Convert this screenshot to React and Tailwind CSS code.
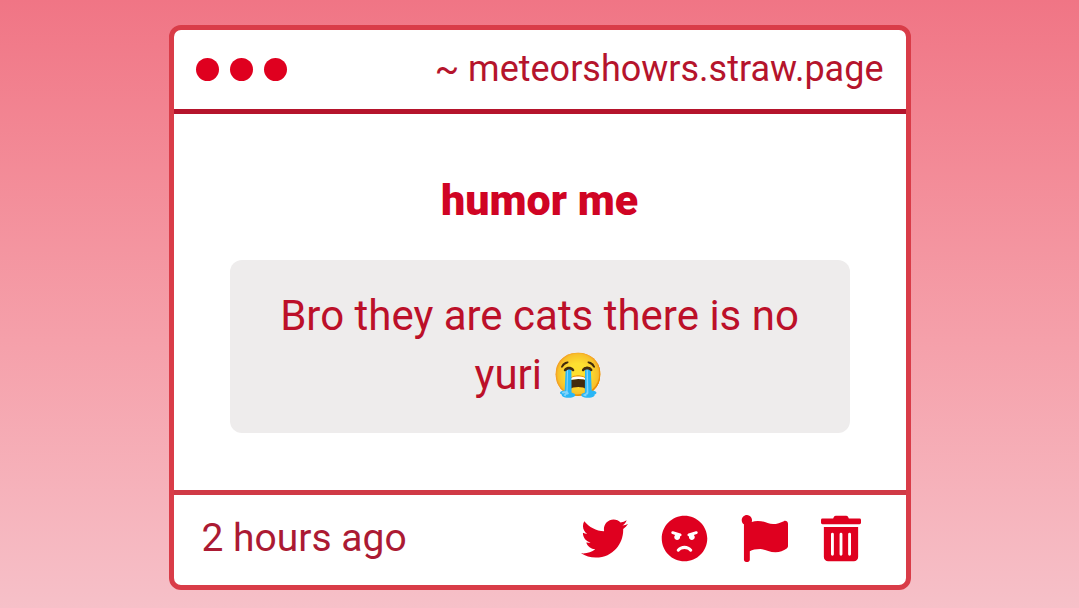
import React from 'react';
import { FaTwitter, FaAngry, FaFlag, FaTrashAlt } from 'react-icons/fa';

const actions = [
    { label: 'Share on Twitter', Icon: FaTwitter, size: 'h-[47px] w-[47px]' },
    { label: 'Block', Icon: FaAngry, size: 'h-[47px] w-[47px]' },
    { label: 'Report', Icon: FaFlag, size: 'h-[47px] w-[47px]' },
    { label: 'Delete', Icon: FaTrashAlt, size: 'h-[47px] w-10' },
];

function WindowHeader() {
    return (
        <header className="flex h-[84px] items-center justify-between border-b-5 border-[#b5142c] px-[22px]">
            <div className="flex gap-[11px]">
                <span className="size-[23px] rounded-full bg-[#df001f]" />
                <span className="size-[23px] rounded-full bg-[#df001f]" />
                <span className="size-[23px] rounded-full bg-[#df001f]" />
            </div>
            <a href="#" className="pb-0.5 text-4xl text-[#b5142c]">~ meteorshowrs.straw.page</a>
        </header>
    );
}

export default function App() {
    return (
        <div className="min-h-screen bg-linear-to-b from-[#f07585] to-[#f6c0c8] px-4 pt-[25px] pb-[18px] font-['Roboto',sans-serif]">
            <article className="mx-auto max-w-[742px] overflow-hidden rounded-xl border-5 border-[#d93c48] bg-white">
                <WindowHeader />

                <main className="px-14 pt-14 pb-[57px] text-center">
                    <h1 className="mb-[30px] text-[43px] leading-[60px] font-black text-[#d00424]">humor me</h1>
                    <p className="rounded-xl bg-[#eeecec] px-8 pt-[26px] pb-[29px] text-[42px] leading-[59px] text-[#bc1029]">
                        Bro they are cats there is no yuri 😭
                    </p>
                </main>

                <footer className="flex h-[95px] items-center justify-between border-t-5 border-[#d03a46] pr-[45px] pb-1 pl-7">
                    <time className="text-[39px] leading-[50px] text-[#ab1a33]">2 hours ago</time>
                    <div className="flex items-center gap-[33px]">
                        {actions.map(({ label, Icon, size }) => (
                            <button key={label} type="button" aria-label={label} className="text-[#df001f]">
                                <Icon className={size} />
                            </button>
                        ))}
                    </div>
                </footer>
            </article>
        </div>
    );
}
